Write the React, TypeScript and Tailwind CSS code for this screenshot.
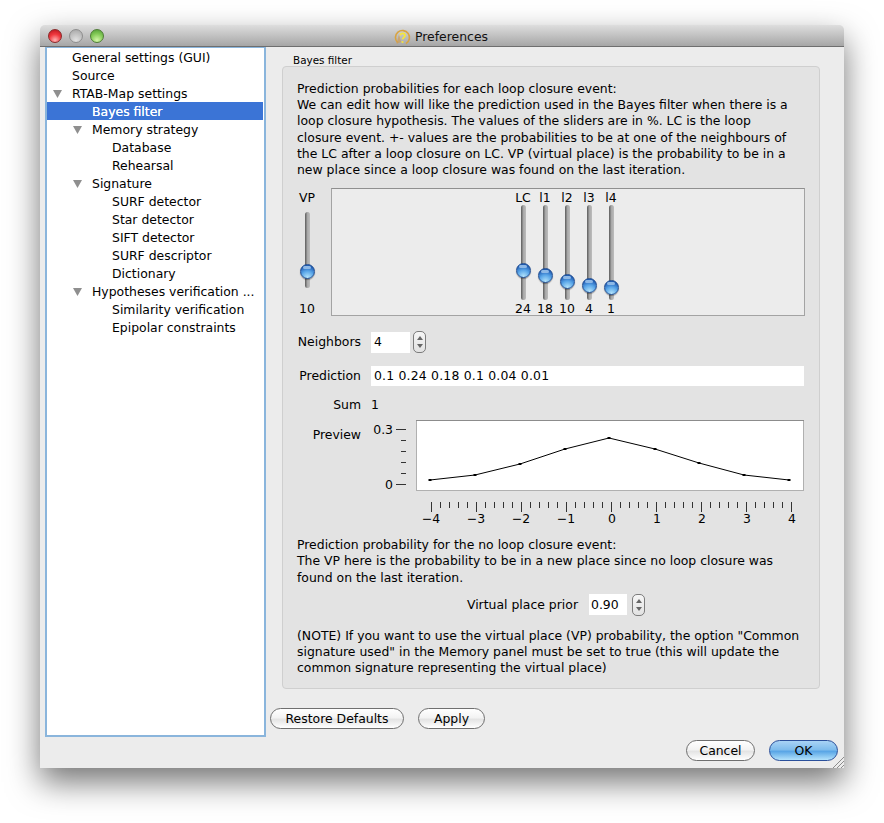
import React from "react";

const tree: { t: string; d: 0 | 1 | 2; arrow?: boolean; sel?: boolean }[] = [
  { t: "General settings (GUI)", d: 0 },
  { t: "Source", d: 0 },
  { t: "RTAB-Map settings", d: 0, arrow: true },
  { t: "Bayes filter", d: 1, sel: true },
  { t: "Memory strategy", d: 1, arrow: true },
  { t: "Database", d: 2 },
  { t: "Rehearsal", d: 2 },
  { t: "Signature", d: 1, arrow: true },
  { t: "SURF detector", d: 2 },
  { t: "Star detector", d: 2 },
  { t: "SIFT detector", d: 2 },
  { t: "SURF descriptor", d: 2 },
  { t: "Dictionary", d: 2 },
  { t: "Hypotheses verification ...", d: 1, arrow: true },
  { t: "Similarity verification", d: 2 },
  { t: "Epipolar constraints", d: 2 },
];

const padClass = { 0: "pl-[25px]", 1: "pl-[45px]", 2: "pl-[65px]" };
const arrowClass = { 0: "left-[6px]", 1: "left-[26px]", 2: "left-[46px]" };

function TreeRow({ r }: { r: (typeof tree)[number] }) {
  return (
    <div
      className={`relative flex h-[18px] items-center whitespace-nowrap pt-[2px] ${padClass[r.d]} ${
        r.sel ? "mr-px bg-[#3b74d6] text-white [text-shadow:0_0_0.6px_#ffffff]" : "text-black"
      }`}
    >
      {r.arrow && (
        <svg width="9" height="8" viewBox="0 0 9 8" className={`absolute top-[6px] ${arrowClass[r.d]}`}>
          <polygon points="0,0 9,0 4.5,8" fill="#8f8f8f" />
        </svg>
      )}
      {r.t}
    </div>
  );
}

function Knob({ top }: { top: number }) {
  return (
    <div
      className="absolute left-[-5px] h-[15px] w-[15px] rounded-full border border-[#234f92] bg-[radial-gradient(circle_at_50%_95%,#b4e4fb_0%,#5aa6e8_45%,#1f5cb4_80%)] shadow-[0_1px_1px_rgba(0,0,0,0.35)]"
      style={{ top }}
    >
      <div className="mx-auto mt-px h-[3px] w-[8px] rounded-full bg-[#8db8e6]" />
    </div>
  );
}

function Track({ h, knob }: { h: number; knob: number }) {
  return (
    <div
      className="relative w-[5px] shrink-0 rounded-full bg-gradient-to-r from-[#5c5c5c] via-[#a9a9a9] to-[#bdbdbd]"
      style={{ height: h }}
    >
      <Knob top={knob} />
    </div>
  );
}

const sliders = [
  { l: "LC", v: "24", k: 58 },
  { l: "l1", v: "18", k: 63 },
  { l: "l2", v: "10", k: 69 },
  { l: "l3", v: "4", k: 73 },
  { l: "l4", v: "1", k: 75 },
];

function Spinner() {
  return (
    <div className="flex h-[22px] w-[13px] flex-col items-center justify-center gap-[4px] rounded-[5px] border border-[#7c7c7c] bg-gradient-to-b from-[#f6f6f6] to-[#e2e2e2]">
      <svg width="6" height="4" viewBox="0 0 6 4"><polygon points="3,0 6,4 0,4" fill="#666" /></svg>
      <svg width="6" height="4" viewBox="0 0 6 4"><polygon points="0,0 6,0 3,4" fill="#666" /></svg>
    </div>
  );
}

function Pill({ w, label, primary }: { w: number; label: string; primary?: boolean }) {
  return (
    <button
      style={{ width: w }}
      className={`flex h-[21px] items-center justify-center rounded-full border pt-[2px] text-black ${
        primary
          ? "border-[#2a4f9a] bg-[linear-gradient(#a9d3f5_0%,#7fbcec_45%,#5aa6e6_55%,#b3e2fb_100%)]"
          : "border-[#6f6f6f] bg-[linear-gradient(#ffffff_0%,#f3f3f3_45%,#e4e4e4_55%,#ffffff_100%)]"
      }`}
    >
      {label}
    </button>
  );
}

function Plot() {
  const pts = [[430, 480], [475, 475], [520, 464], [565, 449], [609, 438], [655, 449], [699, 463], [744, 475], [789, 480]];
  const left = [429, 440, 451, 462, 473, 484];
  const ticks = Array.from({ length: 41 }, (_, i) => 431 + i * 9);
  return (
    <svg width="448" height="110" viewBox="362 420 448 110" className="block text-[12.43px]" fill="#000">
      <rect x="416.5" y="420.5" width="387" height="70" fill="#fff" stroke="#b0b0b0" />
      <line x1="416" y1="420.5" x2="804" y2="420.5" stroke="#8c8c8c" />
      <polyline points={pts.map((p) => p.join(",")).join(" ")} fill="none" stroke="#000" strokeWidth="1" />
      {pts.map((p) => (
        <rect key={p[0]} x={p[0] - 1.5} y={p[1] - 1} width="3" height="2" fill="#000" />
      ))}
      {left.map((y, i) => (
        <line key={y} x1={i === 0 || i === 5 ? 396 : 401} x2="406" y1={y + 0.5} y2={y + 0.5} stroke="#333" />
      ))}
      <text x="393" y="433.5" textAnchor="end">0.3</text>
      <text x="393" y="488.5" textAnchor="end">0</text>
      {ticks.map((x, i) => (
        <line key={x} x1={x + 0.5} x2={x + 0.5} y1="502" y2={i % 5 === 0 ? 512 : 508} stroke="#333" />
      ))}
      {[-4, -3, -2, -1, 0, 1, 2, 3, 4].map((n, i) => (
        <text key={n} x={432 + i * 45 + (n < 0 ? -1 : 0)} y="523" textAnchor="middle">
          {n < 0 ? `\u2212${-n}` : n}
        </text>
      ))}
    </svg>
  );
}

export default function App() {
  return (
    <div className="h-[823px] w-[884px] overflow-hidden bg-white pl-[40px] pt-[25px] font-['DejaVu_Sans','Liberation_Sans',sans-serif] text-[12.43px] text-black">
      <div className="relative flex h-[743px] w-[804px] flex-col rounded-t-[5px] bg-[#ececec] shadow-[0_14px_32px_rgba(0,0,0,0.55)]">
        <div className="relative flex h-[22px] items-center justify-center gap-[4px] rounded-t-[5px] border-b border-[#6e6e6e] bg-gradient-to-b from-[#dedede] to-[#a6a6a6] pr-[2px] pt-[3px]">
          <div className="absolute left-[8px] top-[4px] flex gap-[7px]">
            <div className="h-[14px] w-[14px] rounded-full border border-[#8a2a2a] bg-[radial-gradient(circle_at_50%_85%,#ffb3b3_0%,#f0393f_50%,#b5121b_100%)]" />
            <div className="h-[14px] w-[14px] rounded-full border border-[#8e8e8e] bg-[radial-gradient(circle_at_50%_85%,#e2e2e2_0%,#bdbdbd_60%,#a4a4a4_100%)]" />
            <div className="h-[14px] w-[14px] rounded-full border border-[#4f7d36] bg-[radial-gradient(circle_at_50%_85%,#d4f7a8_0%,#82c956_55%,#4e9a34_100%)]" />
          </div>
          <svg width="17" height="17" viewBox="0 0 17 17">
            <path d="M3.5 13.5 A7 7 0 1 1 12 14.6" fill="none" stroke="#d9a441" strokeWidth="1.6" />
            <path d="M5 5 L2.5 15 L7 13Z" fill="#d49a44" opacity="0.6" />
            <path d="M6.3 6.5 C6.5 3.6 11.2 3.8 11 6.6 C10.9 8.4 8.7 8.4 8.6 10.4" fill="none" stroke="#f5e63c" strokeWidth="1.8" />
            <circle cx="8.5" cy="13" r="1.1" fill="#f5e63c" />
          </svg>
          <span className="text-[#111]">Preferences</span>
        </div>

        <div className="flex h-[690px]">
          <div className="ml-[5px] h-[690px] w-[221px] border-x-2 border-b-2 border-t border-[#8ab5dc] bg-white">
            {tree.map((r) => (
              <TreeRow key={r.t} r={r} />
            ))}
          </div>

          <div className="flex flex-col">
            <div className="ml-[27px] flex h-[19px] items-end text-[10.4px] leading-[12px] text-black">Bayes filter</div>
            <div className="ml-[16px] flex h-[623px] w-[538px] flex-col rounded-[4px] border border-[#cfcfcf] bg-[#e3e3e3] pl-[14px] pt-[14px] leading-[16.2px]">
              <div className="whitespace-nowrap">
                <div>Prediction probabilities for each loop closure event:</div>
                <div>We can edit how will like the prediction used in the Bayes filter when there is a</div>
                <div>loop closure hypothesis. The values of the sliders are in %. LC is the loop</div>
                <div>closure event. +- values are the probabilities to be at one of the neighbours of</div>
                <div>the LC after a loop closure on LC. VP (virtual place) is the probability to be in a</div>
                <div>new place since a loop closure was found on the last iteration.</div>
              </div>

              <div className="mt-[10px] flex h-[128px] gap-[14px]">
                <div className="flex w-[20px] flex-col items-center pt-[2px]">
                  <div className="h-[15px]">VP</div>
                  <div className="mt-[7px]"><Track h={76} knob={52} /></div>
                  <div className="mt-[13px]">10</div>
                </div>
                <div className="flex h-[128px] w-[474px] gap-0 border border-[#a3a3a3] border-t-[#8f8f8f] bg-[#ececec] pl-[180px]">
                  {sliders.map((s) => (
                    <div key={s.l} className="flex w-[22px] flex-col items-center">
                      <div className="h-[16px] pt-px">{s.l}</div>
                      <Track h={95} knob={s.k} />
                      <div className="mt-px">{s.v}</div>
                    </div>
                  ))}
                </div>
              </div>

              <div className="mt-[15px] flex items-center">
                <div className="w-[64px] text-right">Neighbors</div>
                <div className="ml-[10px] flex h-[21px] w-[39px] items-center bg-white pl-[3px]">4</div>
                <div className="ml-[3px]"><Spinner /></div>
              </div>

              <div className="mt-[13px] flex items-center">
                <div className="w-[64px] text-right">Prediction</div>
                <div className="ml-[10px] flex h-[20px] w-[433px] items-center bg-white pl-[3px] tracking-[0.2px]">0.1 0.24 0.18 0.1 0.04 0.01</div>
              </div>

              <div className="mt-[11px] flex h-[16px] items-center">
                <div className="w-[64px] text-right">Sum</div>
                <div className="ml-[10px]">1</div>
              </div>

              <div className="mt-[7px] flex">
                <div className="w-[64px] pt-[7px] text-right">Preview</div>
                <div className="ml-px"><Plot /></div>
              </div>

              <div className="mt-[7px] whitespace-nowrap">
                <div>Prediction probability for the no loop closure event:</div>
                <div>The VP here is the probability to be in a new place since no loop closure was</div>
                <div>found on the last iteration.</div>
              </div>

              <div className="mt-[8px] flex items-center">
                <div className="w-[281px] text-right">Virtual place prior</div>
                <div className="ml-[11px] flex h-[21px] w-[38px] items-center bg-white pl-[2px]">0.90</div>
                <div className="ml-[5px]"><Spinner /></div>
              </div>

              <div className="mt-[12px] whitespace-nowrap">
                <div>(NOTE) If you want to use the virtual place (VP) probability, the option "Common</div>
                <div>signature used" in the Memory panel must be set to true (this will update the</div>
                <div>common signature representing the virtual place)</div>
              </div>
            </div>

            <div className="ml-[4px] mt-[19px] flex gap-[14px]">
              <Pill w={134} label="Restore Defaults" />
              <Pill w={67} label="Apply" />
            </div>
          </div>
        </div>

        <div className="flex justify-end gap-[14px] pr-[6px] pt-[3px]">
          <Pill w={69} label="Cancel" />
          <Pill w={69} label="OK" primary />
        </div>

        <svg width="12" height="12" viewBox="0 0 12 12" className="absolute bottom-0 right-0" stroke="#8c8c8c">
          <line x1="1" y1="12" x2="12" y2="1" />
          <line x1="5" y1="12" x2="12" y2="5" />
          <line x1="9" y1="12" x2="12" y2="9" />
        </svg>
      </div>
    </div>
  );
}
